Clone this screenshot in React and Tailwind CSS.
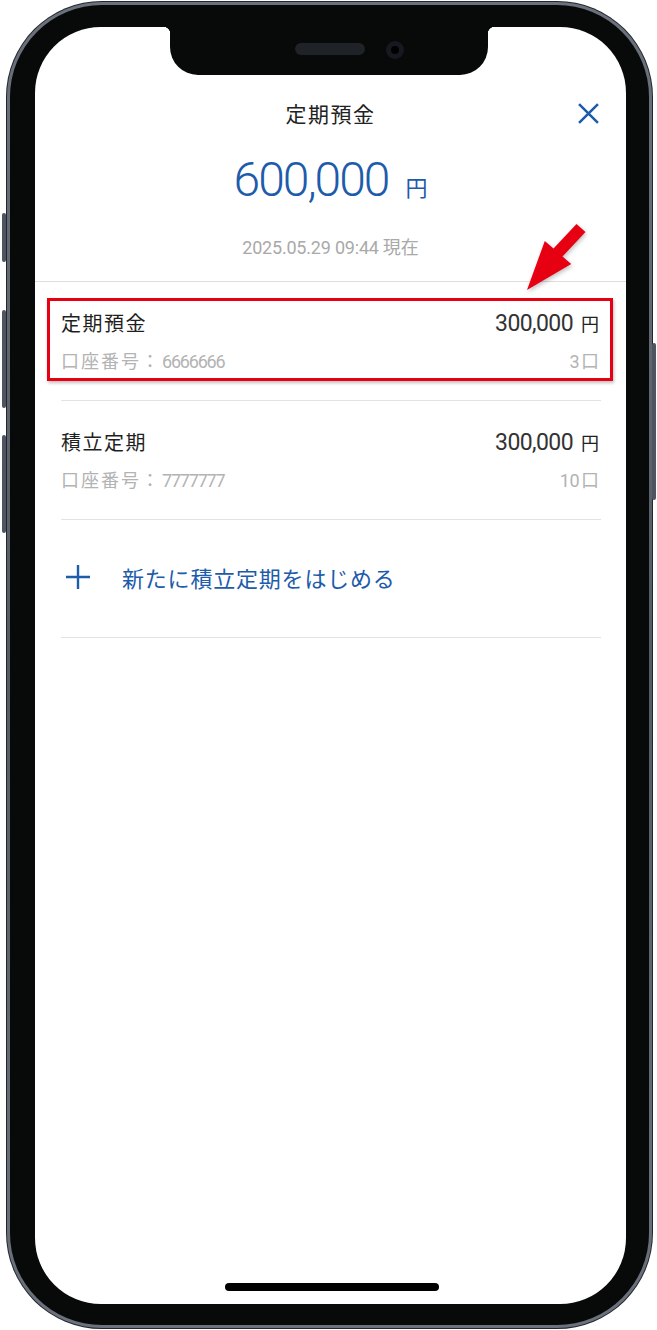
import React from 'react';

const BLUE = 'text-[#1d5bab]';

const SideButton = ({ className }) => (
  <div className={`absolute w-[4px] rounded-[2px] bg-[#4f5560] ${className}`} />
);

const AccountRow = ({ title, amount, number, count, highlighted }) => (
  <div className="relative pt-[28px] pb-[27px] border-b border-[#e3e3e3]">
    {highlighted && (
      <div className="absolute -left-[14px] -right-[12px] top-[16px] h-[83px] border-[3px] border-[#e60012] shadow-[1px_2px_3px_rgba(0,0,0,0.25)]" />
    )}
    <div className="flex items-center justify-between h-[26px]">
      <span className="font-['Noto_Sans_CJK_JP',sans-serif] text-[20px] leading-[26px] tracking-[1.5px] text-[#1f1f1f]">
        {title}
      </span>
      <span className="flex items-baseline font-['Roboto','Noto_Sans_CJK_JP',sans-serif] text-[#333]">
        <span className="text-[23px] leading-[26px] tracking-[-0.6px]">{amount}</span>
        <span className="ml-[8px] mr-[2px] text-[18px] text-[#222] font-['Noto_Sans_CJK_JP',sans-serif]">円</span>
      </span>
    </div>
    <div className="flex items-center justify-between h-[24px] mt-[13px] text-[#b3b3b3]">
      <span className="flex items-baseline">
        <span className="font-['Noto_Sans_CJK_JP',sans-serif] text-[18px] leading-[24px] tracking-[2px]">口座番号：</span>
        <span className="ml-[1px] font-['Roboto',sans-serif] text-[18px] leading-[24px] tracking-[-1.2px]">{number}</span>
      </span>
      <span className="flex items-baseline font-['Roboto','Noto_Sans_CJK_JP',sans-serif] text-[18px] leading-[24px]">
        <span className="tracking-[-0.5px]">{count}</span>
        <span className="ml-[2px] mr-[2px] font-['Noto_Sans_CJK_JP',sans-serif]">口</span>
      </span>
    </div>
  </div>
);

export default function App() {
  return (
    <div className="relative w-[657px] h-[1330px] bg-white overflow-hidden">
      {/* side buttons */}
      <SideButton className="left-[2px] top-[213px] h-[49px]" />
      <SideButton className="left-[2px] top-[310px] h-[98px]" />
      <SideButton className="left-[2px] top-[435px] h-[98px]" />
      <SideButton className="left-[652px] top-[343px] h-[157px]" />

      <div className="ml-[6px] mt-[1px] w-[647px] h-[1328px] rounded-[96px] bg-[#23272c] p-[1px]">
        <div className="h-full rounded-[95px] bg-linear-to-b from-[#6b727d] via-[#555b65] to-[#6b727d] p-[3px]">
          <div className="h-full rounded-[92px] bg-[#080909] pt-[22px] pb-[21px] pl-[25px] pr-[23px]">
            {/* screen */}
            <div className="relative h-full rounded-[66px] bg-white overflow-hidden">
              {/* notch */}
              <div className="absolute left-[135px] top-0 w-[318px] h-[48px] rounded-b-[28px] bg-[#080909]">
                <div className="absolute -left-[7px] top-0 w-[7px] h-[7px] bg-[radial-gradient(circle_at_0_100%,transparent_7px,#080909_7.5px)]" />
                <div className="absolute -right-[7px] top-0 w-[7px] h-[7px] bg-[radial-gradient(circle_at_100%_100%,transparent_7px,#080909_7.5px)]" />
                <div className="absolute left-[125px] top-[16px] w-[70px] h-[12px] rounded-full bg-[#1f2227]" />
                <div className="absolute left-[216px] top-[14px] w-[18px] h-[18px] rounded-full bg-[#161a20] flex items-center justify-center">
                  <div className="w-[8px] h-[8px] rounded-full bg-black" />
                </div>
              </div>

              {/* header */}
              <div className="pt-[71px] border-b border-[#dedede] pb-[23px]">
                <div className="relative h-[30px] flex items-center justify-center">
                  <span className="font-['Noto_Sans_CJK_JP',sans-serif] text-[21px] leading-[30px] tracking-[1.5px] text-[#222]">
                    定期預金
                  </span>
                  <svg
                    className="absolute right-[27px] top-[5px] w-[21px] h-[21px] text-[#1d5bab]"
                    viewBox="0 0 20 20"
                    fill="none"
                    stroke="currentColor"
                    strokeWidth="2.4"
                  >
                    <path d="M1 1 L19 19 M19 1 L1 19" />
                  </svg>
                </div>
                <div className={`mt-[24px] h-[56px] flex items-baseline justify-center font-['Roboto','Noto_Sans_CJK_JP',sans-serif] ${BLUE}`}>
                  <span className="text-[48px] leading-[56px] font-light tracking-[-2px]">600,000</span>
                  <span className="ml-[17px] text-[22px] font-['Noto_Sans_CJK_JP',sans-serif]">円</span>
                </div>
                <div className="mt-[26px] h-[24px] flex items-baseline justify-center font-['Roboto','Noto_Sans_CJK_JP',sans-serif] text-[18px] leading-[24px] text-[#a9a9a9]">
                  <span className="tracking-[-0.2px]">2025.05.29 09:44</span>
                  <span className="ml-[4px] font-['Noto_Sans_CJK_JP',sans-serif]">現在</span>
                </div>
              </div>

              {/* accounts */}
              <div className="pl-[26px] pr-[25px]">
                <AccountRow title="定期預金" amount="300,000" number="6666666" count="3" highlighted />
                <AccountRow title="積立定期" amount="300,000" number="7777777" count="10" />
                <div className="h-[118px] flex items-center border-b border-[#e3e3e3]">
                  <svg
                    className="ml-[5px] -mt-[3px] w-[24px] h-[24px] text-[#1d5bab]"
                    viewBox="0 0 24 24"
                    fill="none"
                    stroke="currentColor"
                    strokeWidth="2.4"
                  >
                    <path d="M12 0 V24 M0 12 H24" />
                  </svg>
                  <span className={`ml-[32px] -mt-[3px] font-['Noto_Sans_CJK_JP',sans-serif] text-[22px] leading-[28px] tracking-[0.8px] ${BLUE}`}>
                    新たに積立定期をはじめる
                  </span>
                </div>
              </div>

              {/* home indicator */}
              <div className="absolute bottom-[13px] left-[190px] w-[214px] h-[8px] rounded-full bg-black" />
            </div>
          </div>
        </div>
      </div>

      {/* annotation arrow */}
      <svg
        className="absolute left-[520px] top-[218px] w-[72px] h-[78px] drop-shadow-[1px_2px_2px_rgba(0,0,0,0.25)]"
        viewBox="520 218 72 78"
      >
        <polygon
          fill="#e60012"
          points="576.5,224.1 585.5,231.9 562.5,256.4 571.2,264 527,290 544.8,241 553.5,248.6"
        />
      </svg>
    </div>
  );
}
